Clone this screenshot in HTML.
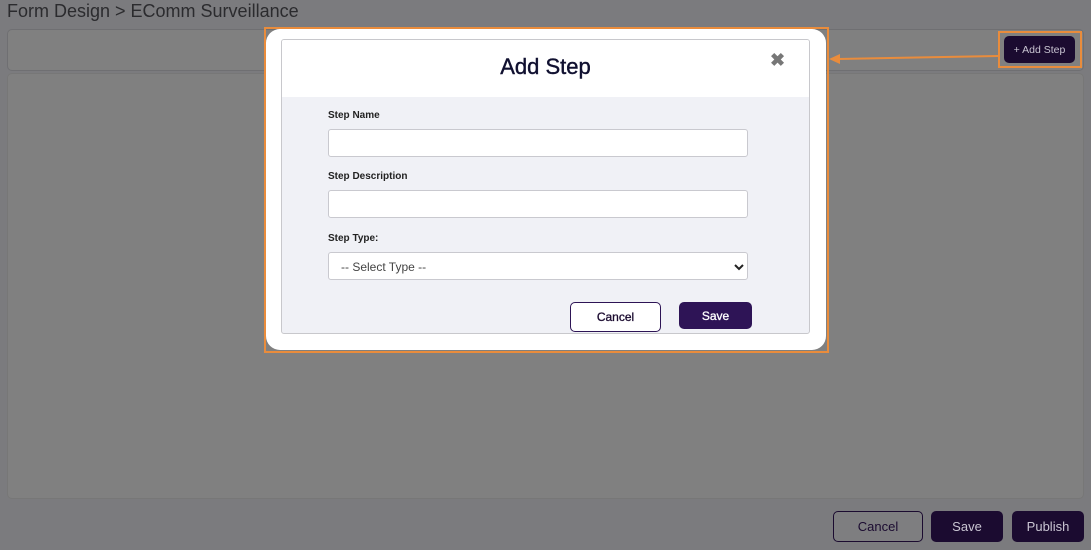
<!DOCTYPE html>
<html><head><style>
*{box-sizing:border-box;margin:0;padding:0}
body{width:1091px;height:550px;background:#7b7b7e;font-family:"Liberation Sans",sans-serif;position:relative;overflow:hidden}
.abs{position:absolute}
.panel{background:#808080;border:1px solid #6f6f72;border-radius:5px}
.btn{position:absolute;border-radius:5px;font-size:13px;display:flex;align-items:center;justify-content:center}
.dark{background:#1b0b30;color:#c9c5d2}
label{position:absolute;left:328px;font-size:10px;font-weight:bold;color:#222}
.inp{position:absolute;left:328px;width:420px;height:28px;background:#fff;border:1px solid #c9c9cf;border-radius:3px}
</style></head><body>
<div class="abs" style="left:7px;top:1px;font-size:18px;color:#2b2b2e">Form Design &gt; EComm Surveillance</div>
<div class="abs panel" style="left:7px;top:29px;width:1077px;height:42px"></div>
<div class="abs panel" style="left:7px;top:73px;width:1077px;height:426px;border-color:#777"></div>
<div class="btn" style="left:833px;top:511px;width:90px;height:31px;border:1px solid #1b0b30;color:#1b0b30;background:#7e7e80">Cancel</div>
<div class="btn dark" style="left:931px;top:511px;width:72px;height:31px">Save</div>
<div class="btn dark" style="left:1012px;top:511px;width:72px;height:31px">Publish</div>

<div class="abs" style="left:998px;top:31px;width:84px;height:37px;border:2px solid #e98c3c"></div>
<div class="btn dark" style="left:1004px;top:36px;width:71px;height:27px;font-size:10.5px">+ Add Step</div>
<svg class="abs" style="left:826px;top:50px" width="175" height="16"><line x1="172" y1="6" x2="12" y2="9" stroke="#e98c3c" stroke-width="2"/><polygon points="3,9 14,4 14,14" fill="#e98c3c"/></svg>

<div class="abs" style="left:264px;top:27px;width:565px;height:326px;border:2px solid #e98c3c"></div>
<div class="abs" style="left:266px;top:29px;width:560px;height:321px;background:#fff;border-radius:14px"></div>
<div class="abs" style="left:281px;top:39px;width:529px;height:295px;border:1px solid #c8c8cc;border-radius:3px;background:#f0f1f6;overflow:hidden">
<div style="height:57px;background:#fff"></div></div>
<div class="abs" style="left:281px;top:54px;width:529px;text-align:center;font-size:22px;color:#101030;-webkit-text-stroke:0.4px #101030">Add Step</div>
<div class="abs" style="left:770px;top:50px;font-size:18px;font-weight:bold;color:#777">✖</div>
<label style="top:110px">Step Name</label>
<div class="inp" style="top:129px"></div>
<label style="top:171px">Step Description</label>
<div class="inp" style="top:190px"></div>
<label style="top:233px">Step Type:</label>
<div class="inp" style="top:252px;font-size:12px;color:#444;padding:7px 12px">-- Select Type --
<svg class="abs" style="right:3px;top:10px" width="10" height="8"><path d="M1 2 L5 6 L9 2" stroke="#222" stroke-width="2" fill="none"/></svg></div>
<div class="btn" style="left:570px;top:302px;width:91px;height:30px;border:1px solid #2d1455;background:#fff;color:#1b0b30;font-size:12px;-webkit-text-stroke:0.3px #1b0b30">Cancel</div>
<div class="btn" style="left:679px;top:302px;width:73px;height:27px;background:#2e1456;color:#fff;font-size:12px;-webkit-text-stroke:0.3px #fff">Save</div>
</body></html>
